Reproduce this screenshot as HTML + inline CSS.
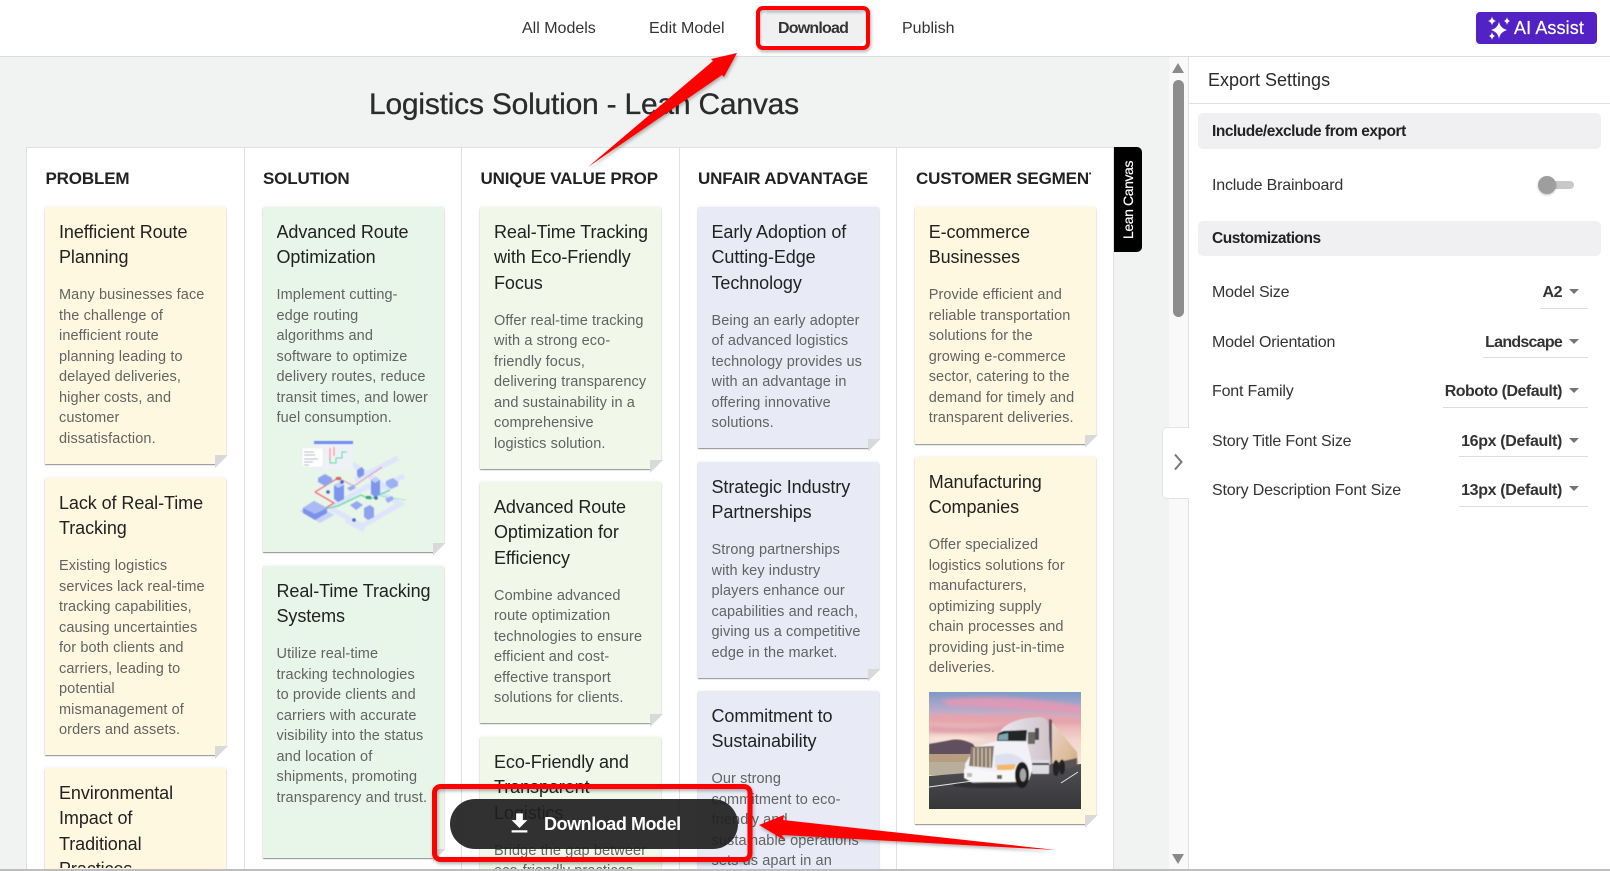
<!DOCTYPE html>
<html><head><meta charset="utf-8"><title>Logistics Solution - Lean Canvas</title>
<style>
*{box-sizing:border-box}
html,body{margin:0;padding:0;background:#fff;height:871px;overflow:hidden}
body{width:1610px;position:relative;font-family:"Liberation Sans",Arial,sans-serif;color:#222}
.a{position:absolute}
.t{position:absolute;white-space:nowrap}
#main{left:0;top:57px;width:1169px;height:812px;background:#f1f3f2}
#hdr{left:0;top:0;width:1610px;height:57px;background:#fff;border-bottom:1px solid #ddd}
.nav{font-size:16px;line-height:20px;top:19px;color:#333}
#board{left:26px;top:147px;width:1088px;height:722px;background:#fff;border:1px solid #e0e0e0;border-bottom:0;overflow:hidden}
.sep{position:absolute;top:0;bottom:0;width:1px;background:#e0e0e0}
.h{position:absolute;top:20px;font-size:17px;line-height:22px;font-weight:700;color:#222;white-space:nowrap;letter-spacing:-.16px}
.c{position:absolute;width:181px;padding:13.1px 14px 0;box-shadow:0 1px 1px rgba(0,0,0,.42),0 0 3px rgba(0,0,0,.08);border-radius:2px 2px 0 0}
.c:before{content:"";position:absolute;right:-3px;bottom:-3px;width:14px;height:12px;background:#fff}
.c:after{content:"";position:absolute;right:-2px;bottom:-4px;width:13px;height:13px;background:#d9d9d9;clip-path:polygon(0 0,100% 0,0 100%)}
.n{overflow:hidden}
.n:before,.n:after{display:none}
.y{background:#fff8e1}.g{background:#e8f5e9}.l{background:#f1f7e9}.v{background:#e8eaf6}
.c b{display:block;font-weight:400;font-size:18px;line-height:25.2px;color:#222;white-space:nowrap;letter-spacing:-.08px;overflow:hidden}
.c p{margin:14.8px 0 0;font-size:14.5px;line-height:20.5px;color:#636363;white-space:nowrap;letter-spacing:.1px;overflow:hidden}
.lab{font-size:16px;line-height:20px;color:#333;left:1212px;letter-spacing:-.18px}
.val{font-size:16px;line-height:20px;font-weight:700;color:#333;right:48px;letter-spacing:-.5px}
.car{position:absolute;left:1569px;width:0;height:0;border-left:5.5px solid transparent;border-right:5.5px solid transparent;border-top:5.5px solid #757575}
.ul{position:absolute;right:22px;height:1px;background:#ddd}
.band{position:absolute;left:1198px;width:403px;background:#f0f0f2;border-radius:5px}
.bt{font-size:15.5px;line-height:20px;color:#222;font-weight:700;left:1212px;letter-spacing:-.48px}
</style></head><body>

<div class="a" id="main"></div>
<div class="a" id="hdr"></div>
<div class="t" style="left:369px;top:87px;font-size:30px;line-height:36px;color:#2b2b2b;letter-spacing:-.22px;-webkit-text-stroke:.3px #2b2b2b">Logistics Solution - Lean Canvas</div>

<div class="a" id="board">
<div class="sep" style="left:217px"></div><div class="sep" style="left:434px"></div><div class="sep" style="left:652px"></div><div class="sep" style="left:869px"></div>
<div class="h" style="left:18.5px">PROBLEM</div>
<div class="h" style="left:236px">SOLUTION</div>
<div class="h" style="left:453.500px">UNIQUE VALUE PROP</div>
<div class="h" style="left:671px">UNFAIR ADVANTAGE</div>
<div class="h" style="left:889px;width:175px;overflow:hidden">CUSTOMER SEGMENT</div>

<div class="c y" style="left:18px;top:59px;height:257px"><b>Inefficient Route<br>Planning</b><p>Many businesses face<br>the challenge of<br>inefficient route<br>planning leading to<br>delayed deliveries,<br>higher costs, and<br>customer<br>dissatisfaction.</p></div>
<div class="c y" style="left:18px;top:330px;height:277px"><b>Lack of Real-Time<br>Tracking</b><p>Existing logistics<br>services lack real-time<br>tracking capabilities,<br>causing uncertainties<br>for both clients and<br>carriers, leading to<br>potential<br>mismanagement of<br>orders and assets.</p></div>
<div class="c y n" style="left:18px;top:620px;height:102px"><b style="height:87px">Environmental<br>Impact of<br>Traditional<br>Practices</b></div>

<div class="c g" style="left:235.500px;top:59px;height:345px"><b>Advanced Route<br>Optimization</b><p>Implement cutting-<br>edge routing<br>algorithms and<br>software to optimize<br>delivery routes, reduce<br>transit times, and lower<br>fuel consumption.</p></div>
<div class="c g" style="left:235.500px;top:418px;height:292px"><b>Real-Time Tracking<br>Systems</b><p>Utilize real-time<br>tracking technologies<br>to provide clients and<br>carriers with accurate<br>visibility into the status<br>and location of<br>shipments, promoting<br>transparency and trust.</p></div>

<div class="c l" style="left:453px;top:59px;height:262px"><b>Real-Time Tracking<br>with Eco-Friendly<br>Focus</b><p>Offer real-time tracking<br>with a strong eco-<br>friendly focus,<br>delivering transparency<br>and sustainability in a<br>comprehensive<br>logistics solution.</p></div>
<div class="c l" style="left:453px;top:334px;height:241px"><b>Advanced Route<br>Optimization for<br>Efficiency</b><p>Combine advanced<br>route optimization<br>technologies to ensure<br>efficient and cost-<br>effective transport<br>solutions for clients.</p></div>
<div class="c l n" style="left:453px;top:589px;height:133px"><b>Eco-Friendly and<br>Transparent<br>Logistics</b><p style="height:30px">Bridge the gap between<br>eco-friendly practices</p></div>

<div class="c v" style="left:670.500px;top:59px;height:241px"><b>Early Adoption of<br>Cutting-Edge<br>Technology</b><p>Being an early adopter<br>of advanced logistics<br>technology provides us<br>with an advantage in<br>offering innovative<br>solutions.</p></div>
<div class="c v" style="left:670.500px;top:314px;height:216px"><b>Strategic Industry<br>Partnerships</b><p>Strong partnerships<br>with key industry<br>players enhance our<br>capabilities and reach,<br>giving us a competitive<br>edge in the market.</p></div>
<div class="c v n" style="left:670.500px;top:543px;height:179px"><b>Commitment to<br>Sustainability</b><p style="height:100px">Our strong<br>commitment to eco-<br>friendly and<br>sustainable operations<br>sets us apart in an</p></div>

<div class="c y" style="left:887.700px;top:59px;height:237px"><b>E-commerce<br>Businesses</b><p>Provide efficient and<br>reliable transportation<br>solutions for the<br>growing e-commerce<br>sector, catering to the<br>demand for timely and<br>transparent deliveries.</p></div>
<div class="c y" style="left:887.700px;top:309px;height:367px"><b>Manufacturing<br>Companies</b><p>Offer specialized<br>logistics solutions for<br>manufacturers,<br>optimizing supply<br>chain processes and<br>providing just-in-time<br>deliveries.</p></div>
</div>

<!-- City illustration -->
<svg class="a" style="left:280px;top:420px" width="160" height="120" viewBox="0 0 160 120">
<g style="filter:blur(.4px)">
<path d="M20 91 L34 83 L54 95 L40 103Z" fill="#c7d3fb"/>
<path d="M50 88 L88 66 L120 84 L82 106Z M70 42 L110 70 M75 60 L118 38 M92 72 L124 56 M66 100 L84 110" fill="none" stroke="#dde4fc" stroke-width="5"/>
<rect x="34" y="21" width="39" height="29" fill="#eef1f7"/><rect x="34" y="21" width="39" height="3" fill="#6d8bf0"/>
<path d="M50 28 V43 H56 V38 H62 V32 H67" fill="none" stroke="#5fe0a0" stroke-width="1"/><path d="M50 28 V40 M54 27 V36" fill="none" stroke="#f28a8a" stroke-width="1"/>
<rect x="22" y="28" width="21" height="19" fill="#fff" stroke="#e4e4e4" stroke-width=".4"/>
<path d="M24 32h10M24 35h11M24 39h14M24 42h9M24 45h5" stroke="#9aa3b8" stroke-width=".7"/>
<path d="M35 72 L58 58" fill="none" stroke="#f26f7a" stroke-width="1.3"/>
<path d="M58 58 L74 66 L102 47" fill="none" stroke="#de70b0" stroke-width="1.2" stroke-dasharray="1.6 1"/>
<path d="M35 72 L54 83 L44 89" fill="none" stroke="#f26f7a" stroke-width="1.3"/>
<path d="M44 89 L58 86 L81 75 L90 79 L110 70" fill="none" stroke="#67dba8" stroke-width="1.3"/>
<path d="M100 76 L125 80" fill="none" stroke="#67dba8" stroke-width="1" stroke-dasharray="1.5 1.5"/>
<path d="M23 88 L34 81 L47 88 L47 93 L35 100 L23 93Z" fill="#7b92ea"/><path d="M23 88 L34 81 L47 88 L35 94Z" fill="#a9baf5"/>
<path d="M54 65 L60 62 L64 65 V79 L58 82 L54 79Z" fill="#7d95ec"/><path d="M54 65 L60 62 L64 65 L58 68Z" fill="#c2cef9"/>
<path d="M91 60 L96 57 L100 60 V74 L95 77 L91 74Z" fill="#7d95ec"/><path d="M91 60 L96 57 L100 60 L95 63Z" fill="#c2cef9"/>
<path d="M84 88 L90 85 L94 88 V97 L88 100 L84 97Z" fill="#8ea3ef"/>
<path d="M38 58 L45 54 L52 58 V62 L45 66 L38 62Z" fill="#8ea3ef"/>
<path d="M106 61 L113 58 L118 62 V66 L111 69 L106 65Z" fill="#9db0f2"/>
<path d="M70 85 L77 81 L83 85 L76 90Z" fill="#95a8f0"/>
<path d="M77 50 L82 47 L84 50 V55 L79 58 L77 55Z" fill="#7d95ec"/>
<path d="M67 68 L73 65 L76 68 L70 71Z M105 79 L112 76 L114 79 L108 83Z" fill="#9aadf1"/>
<circle cx="48" cy="72" r="1.8" fill="#4f64b8"/><circle cx="96" cy="78" r="1.8" fill="#4f64b8"/><circle cx="74" cy="100" r="1.8" fill="#4f64b8"/><circle cx="62" cy="62" r="1.8" fill="#4f64b8"/>
<rect x="86" y="76" width="5" height="3" fill="#3f9f78"/><rect x="56" y="57" width="5" height="3" fill="#d9606a"/>
</g></svg>

<!-- Truck -->
<svg class="a" style="left:929px;top:692px" width="152" height="117" viewBox="0 0 152 117">
<defs>
<linearGradient id="sk" x1="0" y1="0" x2="0" y2="1"><stop offset="0" stop-color="#7d9ac8"/><stop offset=".14" stop-color="#b4a9c9"/><stop offset=".28" stop-color="#e7b5b4"/><stop offset=".42" stop-color="#f2d6cf"/><stop offset=".58" stop-color="#f4e4d8"/></linearGradient>
<linearGradient id="rd" x1="0" y1="0" x2="0" y2="1"><stop offset="0" stop-color="#4f4f54"/><stop offset="1" stop-color="#37373a"/></linearGradient>
<linearGradient id="tr" x1="0" y1="0" x2="1" y2="1"><stop offset="0" stop-color="#e7d7d0"/><stop offset=".6" stop-color="#e0bd9c"/><stop offset="1" stop-color="#c6a98c"/></linearGradient>
<linearGradient id="cb" x1="0" y1="0" x2="1" y2="0"><stop offset="0" stop-color="#e9e6ef"/><stop offset="1" stop-color="#cfc3c8"/></linearGradient>
<filter id="bl"><feGaussianBlur stdDeviation=".4"/></filter>
<filter id="bl2"><feGaussianBlur stdDeviation="1.6"/></filter>
</defs>
<rect width="152" height="117" fill="url(#sk)"/>
<g filter="url(#bl2)"><path d="M12 8 Q70 0 152 14 L152 22 Q80 16 20 14Z" fill="#e598b4" opacity=".85"/><path d="M0 22 Q60 24 110 22 L152 26 L152 32 Q70 32 0 30Z" fill="#eb9da8" opacity=".75"/><path d="M0 34 Q50 38 80 32 L80 40 Q40 42 0 40Z" fill="#d98fa6" opacity=".65"/><path d="M0 44 Q40 42 60 48 L30 50 L0 50Z" fill="#fbe6d9" opacity=".8"/></g>
<path d="M0 52 Q12 50 22 48 Q32 46 44 52 L50 62 L0 64Z" fill="#5f4f5e" filter="url(#bl)"/>
<rect y="62" width="60" height="9" fill="#b89c80"/><rect y="70" width="45" height="13" fill="#b9ad9c"/>
<path d="M0 84 L152 72 V117 H0Z" fill="url(#rd)"/>
<path d="M0 95 L44 89" stroke="#e7e7e7" stroke-width="1"/><path d="M132 91 L149 80" stroke="#e5e5e5" stroke-width="1"/>
<g filter="url(#bl)">
<path d="M121 28 L148 60 L149 72 L121 80Z" fill="url(#tr)"/><path d="M120 27 L123 28 L123 80 L120 81Z" fill="#5e5660"/>
<path d="M121 72 L148 66 V74 L121 81Z" fill="#5b5254"/>
<path d="M72 38 Q82 26 110 25 Q119 25 119 34 L122 72 L110 76 L98 80 L88 60 L72 48Z" fill="url(#cb)"/>
<path d="M69 42 L74 39 L98 38 L97 49 L68 49Z" fill="#232528"/><path d="M70 43 L79 41 L79 48 L69 48Z" fill="#7ea5b0"/>
<rect x="99" y="40" width="7" height="12" fill="#6a6763"/><rect x="106" y="36" width="4" height="12" fill="#4a4a50"/>
<path d="M46 55 L68 49 L98 50 L104 76 L100 88 L60 88 L36 82 L36 72Z" fill="#f1f1f7"/>
<path d="M42 55 L65 54 L63 76 L40 74Z" fill="#8a7b6c"/>
<path d="M45 56v19M49 56v19M53 56v20M57 56v20M61 56v20" stroke="#ddcdbd" stroke-width="1.1"/>
<path d="M66 64 Q86 56 100 74 L86 72 L66 76Z" fill="#dde1ef"/>
<path d="M68 73 L87 72 L85 78 L68 78Z" fill="#f4b868"/>
<path d="M35 77 L40 76 L66 80 L88 77 L88 90 L44 91 L35 86Z" fill="#f7f7f7"/>
<rect x="38" y="81" width="5" height="4" fill="#bbb"/><rect x="68" y="83" width="5" height="4" fill="#666"/>
<ellipse cx="93" cy="83" rx="7" ry="13" fill="#1d1d1f"/><ellipse cx="94" cy="83" rx="3.2" ry="6.5" fill="#a5a5a5"/>
<ellipse cx="127" cy="76" rx="3.2" ry="8" fill="#202022"/><ellipse cx="133" cy="75" rx="3" ry="7.5" fill="#202022"/>
<rect x="103" y="68" width="17" height="14" fill="#dcdce2"/><rect x="103" y="71" width="17" height="2" fill="#333"/>
<ellipse cx="60" cy="93" rx="36" ry="3" fill="#1d1d1d" opacity=".55"/>
</g></svg>

<!-- scroll strip & right panel -->
<div class="a" style="left:1169px;top:57px;width:19px;height:812px;background:#f9f9f9"></div>
<div class="a" style="left:1172px;top:63px;width:0;height:0;border-left:6.5px solid transparent;border-right:6.5px solid transparent;border-bottom:10px solid #8a8a8a"></div>
<div class="a" style="left:1173px;top:80px;width:11px;height:237px;background:#8e8e8e;border-radius:6px"></div>
<div class="a" style="left:1172px;top:854px;width:0;height:0;border-left:6.5px solid transparent;border-right:6.5px solid transparent;border-top:10px solid #8a8a8a"></div>
<div class="a" style="left:1188px;top:57px;width:422px;height:812px;background:#fff;border-left:1px solid #e0e0e0"></div>
<div class="a" style="left:1162px;top:427px;width:27px;height:72px;background:#fff;border:1px solid #e4e4e4;border-right:0;border-radius:5px 0 0 5px"></div>
<svg class="a" style="left:1172px;top:452px" width="14" height="20" viewBox="0 0 14 20"><path d="M3 2.5 L9.5 10 L3 17.5" fill="none" stroke="#777" stroke-width="2"/></svg>

<div class="a" style="left:1189px;top:103px;width:421px;height:1px;background:#e0e0e0"></div>
<div class="t" style="left:1208px;top:69px;font-size:18px;line-height:22px;color:#2a2a2a">Export Settings</div>
<div class="band" style="top:113px;height:36px"></div>
<div class="t bt" style="top:122px">Include/exclude from export</div>
<div class="t lab" style="top:176px">Include Brainboard</div>
<div class="a" style="left:1545px;top:181px;width:29px;height:8px;background:#c8c8c8;border-radius:4px"></div>
<div class="a" style="left:1538px;top:176px;width:18px;height:18px;background:#9e9e9e;border-radius:50%;box-shadow:0 1px 2px rgba(0,0,0,.25)"></div>
<div class="band" style="top:221px;height:35px"></div>
<div class="t bt" style="top:229px">Customizations</div>

<div class="t lab" style="top:283px">Model Size</div><div class="t val" style="top:283px">A2</div><div class="car" style="top:289px"></div><div class="ul" style="top:308px;width:48px"></div>
<div class="t lab" style="top:333px">Model Orientation</div><div class="t val" style="top:333px;letter-spacing:-.75px">Landscape</div><div class="car" style="top:339px"></div><div class="ul" style="top:357px;width:105px"></div>
<div class="t lab" style="top:382px">Font Family</div><div class="t val" style="top:382px">Roboto (Default)</div><div class="car" style="top:388px"></div><div class="ul" style="top:407px;width:145px"></div>
<div class="t lab" style="top:432px">Story Title Font Size</div><div class="t val" style="top:432px;letter-spacing:-.35px">16px (Default)</div><div class="car" style="top:438px"></div><div class="ul" style="top:456px;width:129px"></div>
<div class="t lab" style="top:481px">Story Description Font Size</div><div class="t val" style="top:481px;letter-spacing:-.35px">13px (Default)</div><div class="car" style="top:486px"></div><div class="ul" style="top:506px;width:129px"></div>

<!-- bottom line -->
<div class="a" style="left:0;top:869px;width:1610px;height:2px;background:#bdbdbd"></div>

<!-- nav -->
<div class="a" style="left:763px;top:11px;width:102px;height:34px;background:#f0f0f0;border-radius:8px"></div>
<div class="t nav" style="left:522px">All Models</div>
<div class="t nav" style="left:649px">Edit Model</div>
<div class="t nav" style="left:778px;font-weight:700;letter-spacing:-.8px">Download</div>
<div class="t nav" style="left:902px">Publish</div>

<div class="a" style="left:1476px;top:12px;width:121px;height:32px;background:#5322c5;border-radius:4px"></div>
<svg class="a" style="left:1486px;top:16px" width="26" height="26" viewBox="0 0 26 26" fill="#fff">
<path d="M13 5.5 Q14 12 21 14 Q14 16 13 23 Q12 16 5 14 Q12 12 13 5.5Z"/>
<path d="M6 0.5 Q6.5 4 10 5 Q6.5 6 6 9.500 Q5.5 6 2 5 Q5.500 4 6 0.5Z"/>
<path d="M21 1 Q21.4 4 24 5 Q21.4 6 21 9 Q20.6 6 18 5 Q20.6 4 21 1Z"/>
<path d="M6 16 Q6.4 19 9 20 Q6.4 21 6 24 Q5.6 21 3 20 Q5.6 19 6 16Z"/>
</svg>
<div class="t" style="left:1514px;top:17px;font-size:18px;line-height:22px;color:#fff;font-weight:400;letter-spacing:.1px;-webkit-text-stroke:.2px #fff">AI Assist</div>

<!-- Lean Canvas tab -->
<div class="a" style="left:1114px;top:147px;width:28px;height:105px;background:#000;border-radius:0 5px 5px 0"></div>
<div class="t" style="left:1128px;top:199.5px;font-size:14px;line-height:16px;color:#fff;transform:translate(-50%,-50%) rotate(-90deg);letter-spacing:-.4px;-webkit-text-stroke:.2px #fff">Lean Canvas</div>

<!-- download pill -->
<div class="a" style="left:450px;top:799px;width:288px;height:50px;background:rgba(32,32,32,.92);border-radius:25px"></div>
<svg class="a" style="left:506px;top:810px" width="27" height="27" viewBox="0 0 24 24"><path fill="#fff" d="M19 9h-4V3H9v6H5l7 7 7-7zM5 18v2h14v-2H5z"/></svg>
<div class="t" style="left:544px;top:812px;font-size:18px;line-height:24px;color:#fff;font-weight:700;letter-spacing:-.45px">Download Model</div>

<!-- red annotations -->
<svg class="a" style="left:0;top:0" width="1610" height="871" viewBox="0 0 1610 871" fill="none">
<defs><filter id="sh" x="-5%" y="-20%" width="110%" height="140%"><feDropShadow dx="1" dy="2" stdDeviation="1.5" flood-color="#000" flood-opacity=".3"/></filter></defs>
<g filter="url(#sh)">
<rect x="758" y="8" width="110" height="40" rx="5" stroke="#f00" stroke-width="4"/>
<rect x="434.500" y="786.500" width="315.500" height="73" rx="6" stroke="#f00" stroke-width="5"/>
<path fill="#f00" d="M737 53 L711 59 L713 61 L588 167 L722 75 L724 77Z"/>
<path fill="#f00" d="M759 825 L784 815 L783 820 L1056 850 L782 835 L784 840Z"/>
</g></svg>
</body></html>
